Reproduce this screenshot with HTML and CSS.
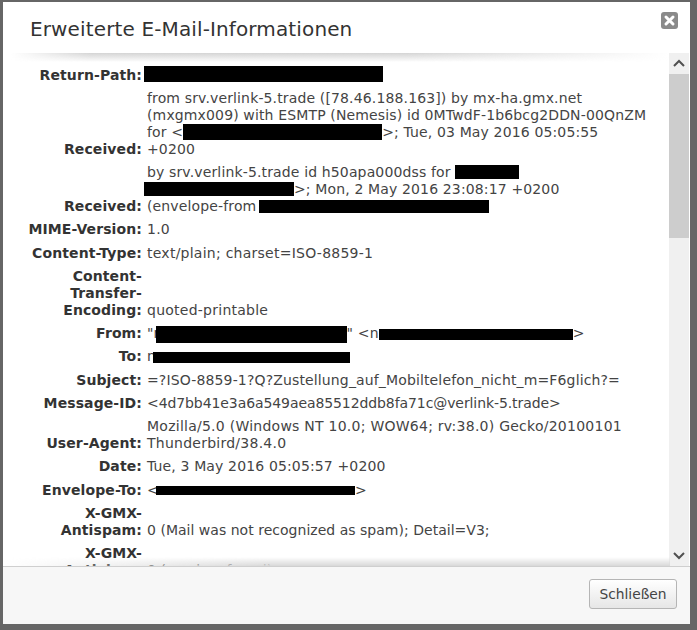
FILE: index.html
```html
<!DOCTYPE html>
<html lang="de">
<head>
  <meta charset="UTF-8">
  <title>Erweiterte E-Mail-Informationen</title>
  <link rel="stylesheet" href="styles.css">
</head>
<body>
  <div class="modal">
    <header class="modal-head">
      <h1>Erweiterte E-Mail-Informationen</h1>
      <button class="close" aria-label="Close">
        <svg width="17" height="17" viewBox="0 0 17 17">
          <rect width="17" height="17" rx="3" fill="#8a8a8a"/>
          <path d="M5 5l7 7M12 5l-7 7" stroke="#fff" stroke-width="3" stroke-linecap="round"/>
        </svg>
      </button>
    </header>

    <div class="modal-body">
      <div class="content">
        <dl class="headers">
          <dt>Return-Path:</dt>
          <dd><span class="mask m-return"></span></dd>

          <dt>Received:</dt>
          <dd>from srv.verlink-5.trade ([78.46.188.163]) by mx-ha.gmx.net<br>
            (mxgmx009) with ESMTP (Nemesis) id 0MTwdF-1b6bcg2DDN-00QnZM<br>
            for &lt;<span class="mask m-for"></span>&gt;; Tue, 03 May 2016 05:05:55<br>
            +0200</dd>

          <dt>Received:</dt>
          <dd>by srv.verlink-5.trade id h50apa000dss for <span class="mask m-by"></span><br>
            <span class="mask m-by2"></span>&gt;; Mon, 2 May 2016 23:08:17 +0200<br>
            (envelope-from <span class="mask m-env"></span></dd>

          <dt>MIME-Version:</dt>
          <dd class="loose">1.0</dd>

          <dt>Content-Type:</dt>
          <dd class="loose">text/plain; charset=ISO-8859-1</dd>

          <dt>Content-<br>Transfer-<br>Encoding:</dt>
          <dd class="loose">quoted-printable</dd>

          <dt>From:</dt>
          <dd>"n<span class="mask m-from"></span>" &lt;n<span class="mask m-addr"></span>&gt;</dd>

          <dt>To:</dt>
          <dd>n<span class="mask m-to"></span></dd>

          <dt>Subject:</dt>
          <dd>=?ISO-8859-1?Q?Zustellung_auf_Mobiltelefon_nicht_m=F6glich?=</dd>

          <dt>Message-ID:</dt>
          <dd class="tighter">&lt;4d7bb41e3a6a549aea85512ddb8fa71c@verlink-5.trade&gt;</dd>

          <dt>User-Agent:</dt>
          <dd class="loose">Mozilla/5.0 (Windows NT 10.0; WOW64; rv:38.0) Gecko/20100101<br>
            Thunderbird/38.4.0</dd>

          <dt>Date:</dt>
          <dd>Tue, 3 May 2016 05:05:57 +0200</dd>

          <dt>Envelope-To:</dt>
          <dd>&lt;<span class="mask m-envto"></span>&gt;</dd>

          <dt>X-GMX-<br>Antispam:</dt>
          <dd class="tight">0 (Mail was not recognized as spam); Detail=V3;</dd>

          <dt>X-GMX-<br>Antivirus:</dt>
          <dd class="tight">0 (no virus found)</dd>
        </dl>
      </div>

      <div class="scrollbar">
        <svg class="arrow" width="20" height="21" viewBox="0 0 20 21">
          <path d="M5 13l5-5 5 5" fill="none" stroke="#505050" stroke-width="2"/>
        </svg>
        <div class="thumb"></div>
        <div class="track"></div>
        <svg class="arrow" width="20" height="21" viewBox="0 0 20 21">
          <path d="M5 8l5 5 5-5" fill="none" stroke="#505050" stroke-width="2"/>
        </svg>
      </div>
    </div>

    <footer class="modal-foot">
      <button class="btn">Schließen</button>
    </footer>
  </div>
</body>
</html>
```

FILE: styles.css
```css
html, body {
  margin: 0;
  height: 630px;
  overflow: hidden;
}
body {
  background: #666;
  padding: 2px 7px 6px 3px;
  box-sizing: border-box;
  font-family: "DejaVu Sans", sans-serif;
  color: #444;
}
.modal {
  height: 100%;
  background: #fff;
  display: flex;
  flex-direction: column;
  position: relative;
}
.modal-head {
  height: 51px;
  flex: none;
  display: flex;
  justify-content: space-between;
  align-items: flex-start;
  padding: 0 12px 0 27px;
  position: relative;
}
/* soft shadow under the title bar, falls over the text */
.modal-head::after {
  content: "";
  position: absolute;
  left: 8px;
  right: 20px;
  top: 51px;
  height: 9px;
  background: linear-gradient(#d4d4d4, rgba(255, 255, 255, 0));
  -webkit-mask-image: linear-gradient(90deg, transparent, #000 12%, #000 60%, transparent);
  z-index: 2;
}
h1 {
  margin: 15px 0 0;
  font-size: 20px;
  line-height: 24px;
  font-weight: normal;
  letter-spacing: 0.13px;
  color: #333;
}
.close {
  border: none;
  background: none;
  padding: 0;
  margin-top: 10px;
  height: 17px;
}
.modal-body {
  flex: 1;
  min-height: 0;
  display: flex;
  position: relative;
}
.modal-body::after {
  content: "";
  position: absolute;
  left: 0;
  right: 20px;
  bottom: 0;
  height: 9px;
  background: linear-gradient(rgba(255, 255, 255, 0), #d8d8d8);
  -webkit-mask-image: linear-gradient(90deg, transparent, #000 40%, #000 100%);
}
.content {
  flex: 1;
  overflow: hidden;
  padding-top: 13.5px;
}
.headers {
  margin: 0;
  display: grid;
  grid-template-columns: 139px 1fr;
  column-gap: 5px;
  row-gap: 6.27px;
  align-items: end;
  font-size: 14px;
  line-height: 17px;
}
dt {
  font-weight: bold;
  text-align: right;
  letter-spacing: 0.1px;
  color: #333;
}
dd {
  margin: 0;
  white-space: nowrap;
  letter-spacing: 0.14px;
}
dd.loose {
  letter-spacing: 0.25px;
}
dd.tight {
  letter-spacing: 0.02px;
}
dd.tighter {
  letter-spacing: -0.09px;
}
.mask {
  display: inline-block;
  background: #000;
  height: 16px;
  margin: -4px 0;
  vertical-align: middle;
}
.m-return { width: 239px; margin: -6px 0 -2px -3px; }
.m-for { width: 199px; margin: -5px 0 -3px; }
.m-by { width: 64px; height: 14px; margin: -5px 0 -3px; }
.m-by2 { width: 150px; height: 14px; margin: -5px 0 -3px -3px; }
.m-env { width: 230px; height: 13px; margin: -5px 0 -3px -2px; }
.m-from { width: 191px; height: 17px; margin-left: -7px; }
.m-addr { width: 194px; height: 11px; }
.m-to { width: 197px; height: 11px; margin-left: -3px; }
.m-envto { width: 199px; height: 9px; margin-left: -3px; }
.scrollbar {
  width: 20px;
  flex: none;
  margin-right: 1px;
  display: flex;
  flex-direction: column;
  background: #f0f0f0;
}
.arrow {
  display: block;
  flex: none;
}
.thumb {
  height: 164px;
  flex: none;
  background: #cdcdcd;
}
.track {
  flex: 1;
}
.modal-foot {
  height: 58px;
  flex: none;
  background: #f7f7f7;
  border-top: 1px solid #cfcfcf;
  display: flex;
  justify-content: flex-end;
  align-items: flex-start;
  padding: 12px 13px 0 0;
  box-sizing: border-box;
}
.btn {
  width: 88px;
  height: 30px;
  padding: 0;
  border: 1px solid #b5b5b5;
  border-radius: 3px;
  background: linear-gradient(#fff, #e6e6e6);
  font-family: inherit;
  font-size: 13.8px;
  color: #444;
}
```
